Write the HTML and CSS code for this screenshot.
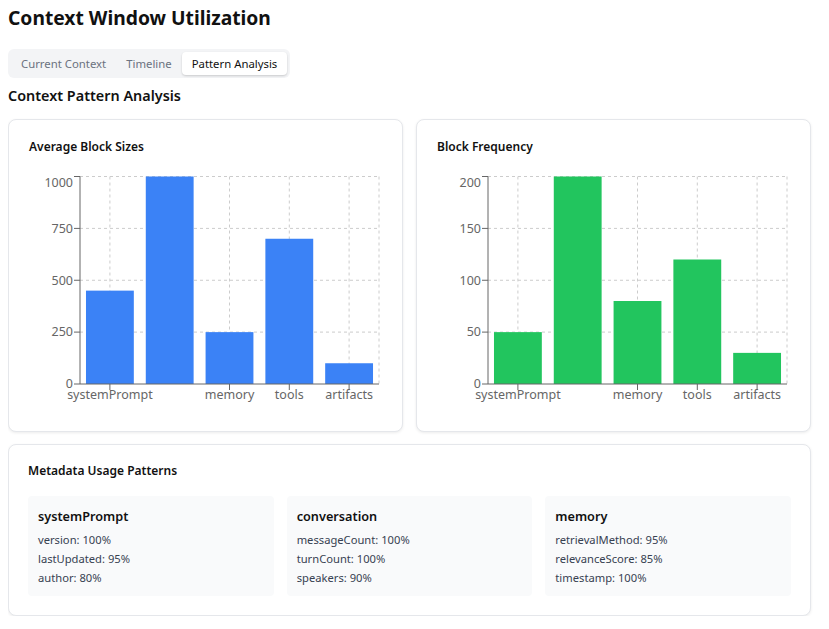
FILE: index.html
```html
<!DOCTYPE html>
<html lang="en">
<head>
<meta charset="utf-8">
<title>Context Window Utilization</title>
<link rel="stylesheet" href="styles.css">
</head>
<body>
<div class="page">
  <h1 class="title">Context Window Utilization</h1>
  <div class="tabs">
    <button class="tab">Current Context</button>
    <button class="tab">Timeline</button>
    <button class="tab tab-active">Pattern Analysis</button>
  </div>
  <h2 class="section-title">Context Pattern Analysis</h2>

  <div class="chart-grid">
    <div class="card chart-card">
      <h3 class="card-title">Average Block Sizes</h3>
      <svg class="chart" width="353" height="250" viewBox="0 0 353 250">
        <g class="grid">
          <line x1="51" y1="13.5" x2="350" y2="13.5"/>
          <line x1="51" y1="65.4" x2="350" y2="65.4"/>
          <line x1="51" y1="117.25" x2="350" y2="117.25"/>
          <line x1="51" y1="169.1" x2="350" y2="169.1"/>
          <line x1="80.9" y1="13.5" x2="80.9" y2="221"/>
          <line x1="200.5" y1="13.5" x2="200.5" y2="221"/>
          <line x1="260.3" y1="13.5" x2="260.3" y2="221"/>
          <line x1="320.1" y1="13.5" x2="320.1" y2="221"/>
          <line x1="350" y1="13.5" x2="350" y2="221"/>
        </g>
        <g class="bars-blue">
          <rect x="56.98" y="127.625" width="47.84" height="93.375"/>
          <rect x="116.78" y="13.5" width="47.84" height="207.5"/>
          <rect x="176.58" y="169.125" width="47.84" height="51.875"/>
          <rect x="236.38" y="75.75" width="47.84" height="145.25"/>
          <rect x="296.18" y="200.25" width="47.84" height="20.75"/>
        </g>
        <g class="axis">
          <line x1="51" y1="13.5" x2="51" y2="221"/>
          <line x1="51" y1="221" x2="350" y2="221"/>
          <line x1="45" y1="13.5" x2="51" y2="13.5"/>
          <line x1="45" y1="65.4" x2="51" y2="65.4"/>
          <line x1="45" y1="117.25" x2="51" y2="117.25"/>
          <line x1="45" y1="169.1" x2="51" y2="169.1"/>
          <line x1="45" y1="221" x2="51" y2="221"/>
          <line x1="80.9" y1="221" x2="80.9" y2="227"/>
          <line x1="200.5" y1="221" x2="200.5" y2="227"/>
          <line x1="260.3" y1="221" x2="260.3" y2="227"/>
          <line x1="320.1" y1="221" x2="320.1" y2="227"/>
        </g>
        <g class="ylabels">
          <text x="44" y="24">1000</text>
          <text x="44" y="69.7">750</text>
          <text x="44" y="121.5">500</text>
          <text x="44" y="173.4">250</text>
          <text x="44" y="225.3">0</text>
        </g>
        <g class="xlabels">
          <text x="80.9" y="235.5">systemPrompt</text>
          <text x="200.5" y="235.5">memory</text>
          <text x="260.3" y="235.5">tools</text>
          <text x="320.1" y="235.5">artifacts</text>
        </g>
      </svg>
    </div>

    <div class="card chart-card">
      <h3 class="card-title">Block Frequency</h3>
      <svg class="chart" width="353" height="250" viewBox="0 0 353 250">
        <g class="grid">
          <line x1="51" y1="13.5" x2="350" y2="13.5"/>
          <line x1="51" y1="65.4" x2="350" y2="65.4"/>
          <line x1="51" y1="117.25" x2="350" y2="117.25"/>
          <line x1="51" y1="169.1" x2="350" y2="169.1"/>
          <line x1="80.9" y1="13.5" x2="80.9" y2="221"/>
          <line x1="200.5" y1="13.5" x2="200.5" y2="221"/>
          <line x1="260.3" y1="13.5" x2="260.3" y2="221"/>
          <line x1="320.1" y1="13.5" x2="320.1" y2="221"/>
          <line x1="350" y1="13.5" x2="350" y2="221"/>
        </g>
        <g class="bars-green">
          <rect x="56.98" y="169.125" width="47.84" height="51.875"/>
          <rect x="116.78" y="13.5" width="47.84" height="207.5"/>
          <rect x="176.58" y="138" width="47.84" height="83"/>
          <rect x="236.38" y="96.5" width="47.84" height="124.5"/>
          <rect x="296.18" y="189.875" width="47.84" height="31.125"/>
        </g>
        <g class="axis">
          <line x1="51" y1="13.5" x2="51" y2="221"/>
          <line x1="51" y1="221" x2="350" y2="221"/>
          <line x1="45" y1="13.5" x2="51" y2="13.5"/>
          <line x1="45" y1="65.4" x2="51" y2="65.4"/>
          <line x1="45" y1="117.25" x2="51" y2="117.25"/>
          <line x1="45" y1="169.1" x2="51" y2="169.1"/>
          <line x1="45" y1="221" x2="51" y2="221"/>
          <line x1="80.9" y1="221" x2="80.9" y2="227"/>
          <line x1="200.5" y1="221" x2="200.5" y2="227"/>
          <line x1="260.3" y1="221" x2="260.3" y2="227"/>
          <line x1="320.1" y1="221" x2="320.1" y2="227"/>
        </g>
        <g class="ylabels">
          <text x="44" y="24">200</text>
          <text x="44" y="69.7">150</text>
          <text x="44" y="121.5">100</text>
          <text x="44" y="173.4">50</text>
          <text x="44" y="225.3">0</text>
        </g>
        <g class="xlabels">
          <text x="80.9" y="235.5">systemPrompt</text>
          <text x="200.5" y="235.5">memory</text>
          <text x="260.3" y="235.5">tools</text>
          <text x="320.1" y="235.5">artifacts</text>
        </g>
      </svg>
    </div>
  </div>

  <div class="card meta-card">
    <h3 class="card-title meta-title">Metadata Usage Patterns</h3>
    <div class="meta-grid">
      <div class="meta-box">
        <h4 class="meta-name">systemPrompt</h4>
        <p class="meta-line">version: 100%</p>
        <p class="meta-line">lastUpdated: 95%</p>
        <p class="meta-line">author: 80%</p>
      </div>
      <div class="meta-box">
        <h4 class="meta-name">conversation</h4>
        <p class="meta-line">messageCount: 100%</p>
        <p class="meta-line">turnCount: 100%</p>
        <p class="meta-line">speakers: 90%</p>
      </div>
      <div class="meta-box">
        <h4 class="meta-name">memory</h4>
        <p class="meta-line">retrievalMethod: 95%</p>
        <p class="meta-line">relevanceScore: 85%</p>
        <p class="meta-line">timestamp: 100%</p>
      </div>
    </div>
  </div>
</div>
</body>
</html>
```

FILE: styles.css
```css
* {
  box-sizing: border-box;
}

body {
  margin: 8px;
  background: #ffffff;
  font-family: "Noto Sans", "Open Sans", sans-serif;
  color: #111827;
}

.page {
  width: 803px;
}

.title {
  margin: 0;
  font-size: 19.25px;
  line-height: 20px;
  font-weight: 700;
  color: #111111;
}

.tabs {
  display: inline-flex;
  margin-top: 21px;
  padding: 3px;
  background: #f3f4f6;
  border-radius: 6px;
}

.tab {
  font-family: inherit;
  font-size: 11.35px;
  line-height: 23px;
  padding: 0 10px;
  border: 0;
  background: transparent;
  color: #6b7280;
  border-radius: 4px;
  cursor: pointer;
}

.tab-active {
  background: #ffffff;
  color: #111111;
  box-shadow: 0 1px 2px rgba(0, 0, 0, 0.12), 0 1px 3px rgba(0, 0, 0, 0.06);
}

.section-title {
  margin: 8px 0 13px;
  font-size: 14.4px;
  line-height: 20px;
  font-weight: 600;
  color: #111111;
}

.chart-grid {
  display: grid;
  grid-template-columns: 1fr 1fr;
  gap: 13px;
}

.card {
  background: #ffffff;
  border: 1px solid #e5e7eb;
  border-radius: 8px;
  box-shadow: 0 1px 3px rgba(0, 0, 0, 0.08);
  padding: 18px 20px;
}

.chart-card {
  padding-top: 19px;
}

.card-title {
  margin: 0 0 8px;
  font-size: 12px;
  line-height: 16px;
  font-weight: 600;
  color: #111111;
}

.chart {
  display: block;
}

.grid line {
  stroke: #cccccc;
  stroke-dasharray: 3 3;
  stroke-width: 1;
}

.axis line {
  stroke: #666666;
  stroke-width: 1;
}

.bars-blue rect {
  fill: #3b82f6;
}

.bars-green rect {
  fill: #22c55e;
}

.ylabels text,
.xlabels text {
  font-family: "Noto Sans", sans-serif;
  font-size: 12.5px;
  fill: #666666;
}

.ylabels text {
  text-anchor: end;
}

.xlabels text {
  text-anchor: middle;
}

.meta-card {
  margin-top: 12px;
  padding: 18px 19px 19px;
}

.meta-title {
  margin-bottom: 17px;
}

.meta-grid {
  display: grid;
  grid-template-columns: repeat(3, 1fr);
  gap: 13px;
}

.meta-box {
  background: #f9fafb;
  border-radius: 4px;
  padding: 12px 10px 9px;
}

.meta-name {
  margin: 0 0 5px;
  font-size: 12.7px;
  line-height: 17px;
  font-weight: 600;
  color: #111111;
}

.meta-line {
  margin: 0;
  font-size: 11.2px;
  line-height: 19px;
  color: #374151;
}
```
